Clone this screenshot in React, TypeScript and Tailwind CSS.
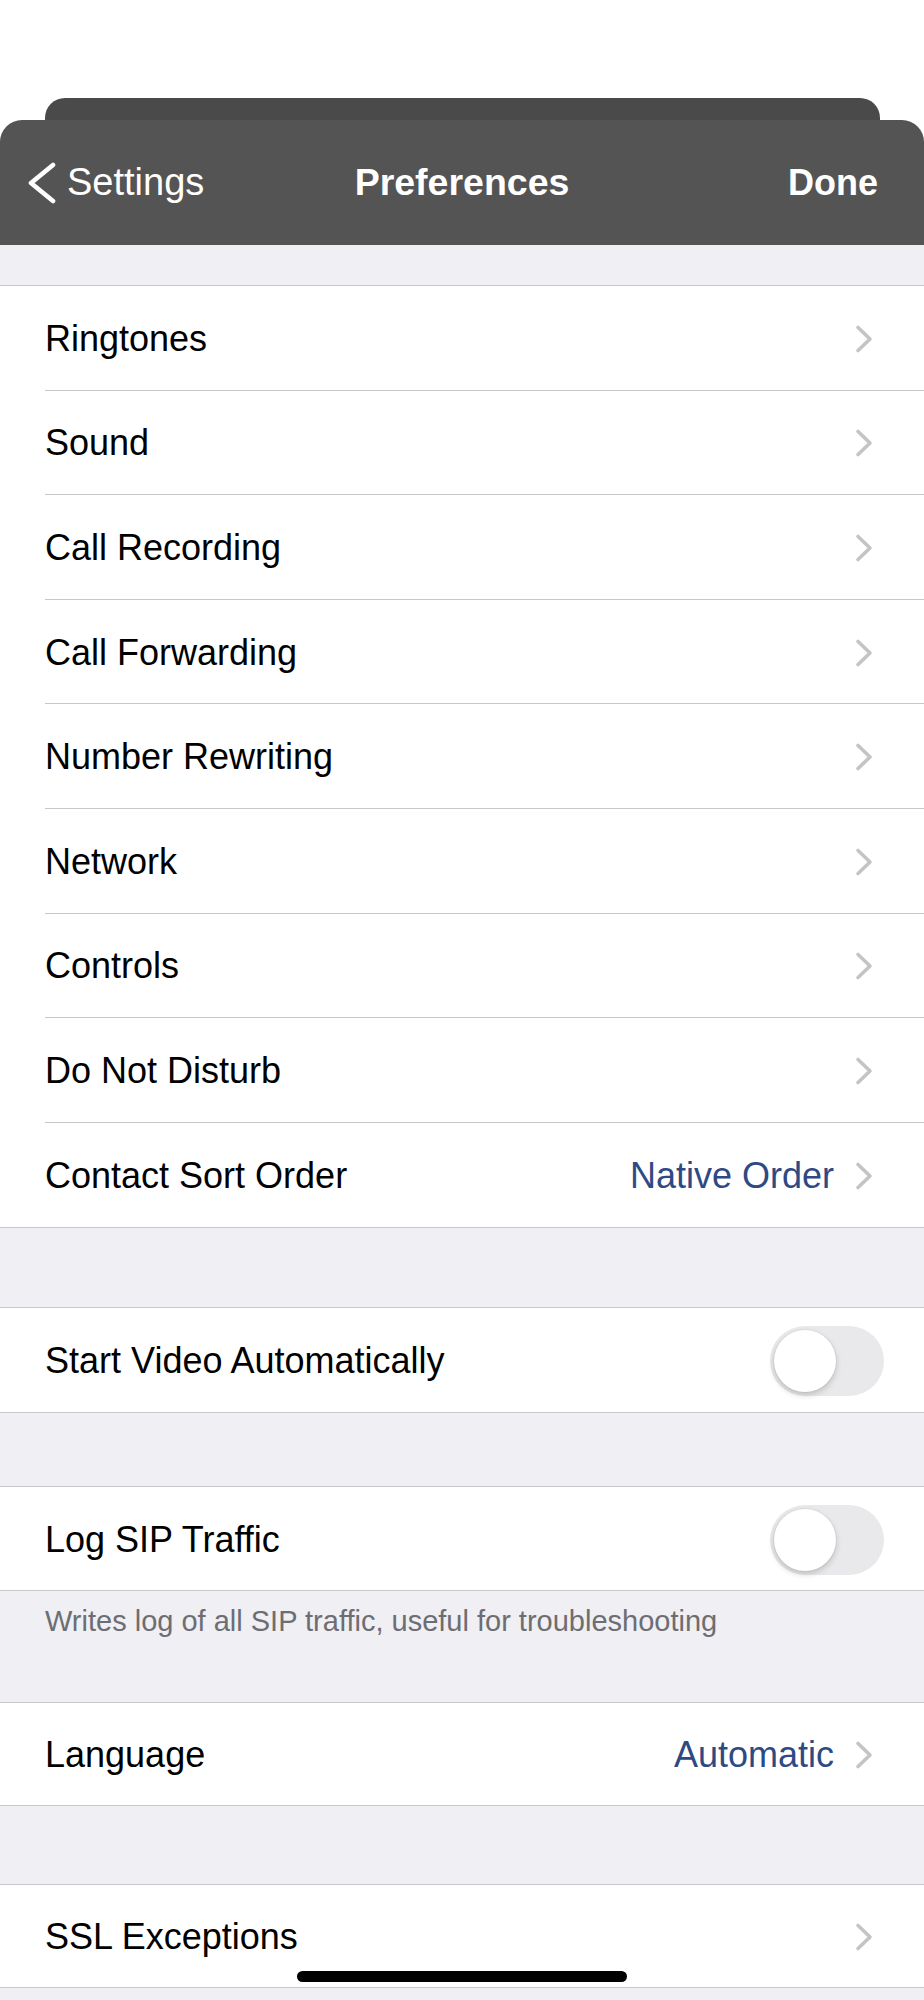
import React from 'react'

type Row = { label: string; value?: string }

const mainRows: Row[] = [
    { label: 'Ringtones' },
    { label: 'Sound' },
    { label: 'Call Recording' },
    { label: 'Call Forwarding' },
    { label: 'Number Rewriting' },
    { label: 'Network' },
    { label: 'Controls' },
    { label: 'Do Not Disturb' },
    { label: 'Contact Sort Order', value: 'Native Order' },
]

function Chevron() {
    return (
        <svg width="20" height="30" viewBox="0 0 20 30" className="shrink-0">
            <polyline
                points="3,3.5 15,15 3,26.5"
                fill="none"
                stroke="#c4c4c7"
                strokeWidth={3.6}
                strokeLinecap="round"
                strokeLinejoin="round"
            />
        </svg>
    )
}

function Toggle() {
    return (
        <div className="w-[114px] h-[70px] rounded-full bg-[#e9e9eb] p-[4px] flex items-center">
            <div className="w-[62px] h-[62px] rounded-full bg-white shadow-[0_3px_6px_rgba(0,0,0,0.18),0_0_0_1px_rgba(0,0,0,0.04)]" />
        </div>
    )
}

function NavRow({ row, last, h = 'h-[104.6px]' }: { row: Row; last: boolean; h?: string }) {
    return (
        <div className="pl-[45px] bg-white">
            <div className={`${h} pt-[2px] flex items-center pr-[49px] ${last ? '' : 'border-b border-[#c8c7cc]'}`}>
                <span className="flex-1 text-[36px] text-black">{row.label}</span>
                {row.value && (
                    <span className="text-[36px] text-[#2d4a84] mr-[21px]">{row.value}</span>
                )}
                <Chevron />
            </div>
        </div>
    )
}

function ToggleRow({ label }: { label: string }) {
    return (
        <div className="bg-white border-y border-[#c8c7cc] pl-[45px]">
            <div className="h-[103.5px] pt-[2px] flex items-center pr-[40px]">
                <span className="flex-1 text-[36px] text-black">{label}</span>
                <Toggle />
            </div>
        </div>
    )
}

export default function App() {
    return (
        <div className="relative w-full min-h-[2000px] bg-[#efeff4] font-['Liberation_Sans',Arial,sans-serif] overflow-hidden">
            {/* top sheet */}
            <div className="bg-white pt-[98px]">
                <div className="ml-[45px] w-[835px] h-[22px] rounded-t-[20px] bg-[#4a4a4a]" />
                <div className="relative h-[125px] rounded-t-[22px] bg-[#545454] flex items-center justify-between text-white">
                    <div className="flex items-center pl-[27px]">
                        <svg width="30" height="42" viewBox="0 0 30 42">
                            <polyline
                                points="26,3 4,21 26,39"
                                fill="none"
                                stroke="#ffffff"
                                strokeWidth={4.6}
                                strokeLinecap="round"
                                strokeLinejoin="round"
                            />
                        </svg>
                        <span className="ml-[10px] text-[38px]">Settings</span>
                    </div>
                    <span className="absolute left-1/2 -translate-x-1/2 text-[37.5px] font-semibold">Preferences</span>
                    <span className="pr-[46px] text-[36px] font-semibold">Done</span>
                </div>
            </div>

            <div className="h-[40px]" />

            <div className="border-y border-[#c8c7cc]">
                {mainRows.map((r, i) => (
                    <NavRow key={r.label} row={r} last={i === mainRows.length - 1} />
                ))}
            </div>

            <div className="h-[79px]" />
            <ToggleRow label="Start Video Automatically" />

            <div className="h-[73px]" />
            <ToggleRow label="Log SIP Traffic" />
            <div className="h-[111px] pl-[45px] pt-[13px]">
                <p className="text-[29px] leading-[34px] text-[#6d6d72]">Writes log of all SIP traffic, useful for troubleshooting</p>
            </div>

            <div className="border-y border-[#c8c7cc]">
                <NavRow row={{ label: 'Language', value: 'Automatic' }} last h="h-[102px]" />
            </div>

            <div className="h-[78px]" />
            <div className="border-y border-[#c8c7cc]">
                <NavRow row={{ label: 'SSL Exceptions' }} last h="h-[102px]" />
            </div>

            {/* home indicator */}
            <div className="absolute left-[297px] top-[1971px] w-[330px] h-[11px] rounded-full bg-black" />
        </div>
    )
}
